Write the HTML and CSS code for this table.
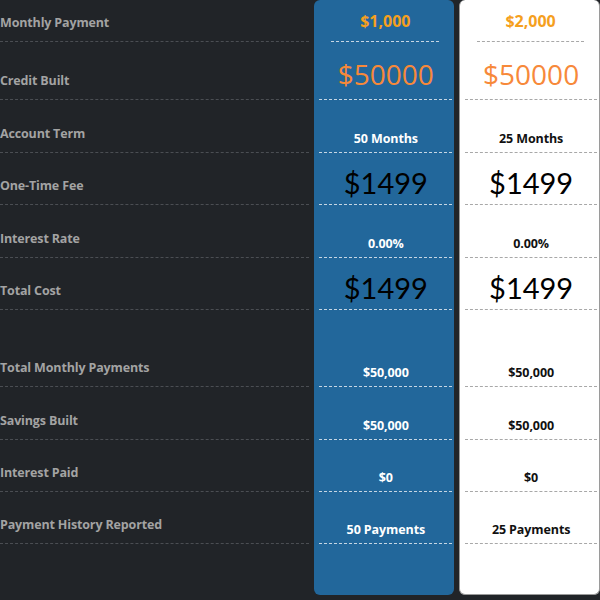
FILE: index.html
```html
<!DOCTYPE html>
<html>
<head>
<meta charset="utf-8">
<link rel="stylesheet" href="styles.css">
</head>
<body>
<div class="compare">
  <div class="col labels">
    <div class="cell">Monthly Payment</div>
    <div class="cell">Credit Built</div>
    <div class="cell">Account Term</div>
    <div class="cell">One-Time Fee</div>
    <div class="cell">Interest Rate</div>
    <div class="cell">Total Cost</div>
    <div class="cell">Total Monthly Payments</div>
    <div class="cell">Savings Built</div>
    <div class="cell">Interest Paid</div>
    <div class="cell">Payment History Reported</div>
  </div>
  <div class="col card blue">
    <div class="cell price">$1,000</div>
    <div class="cell big orange">$50000</div>
    <div class="cell small">50 Months</div>
    <div class="cell big dark">$1499</div>
    <div class="cell small">0.00%</div>
    <div class="cell big dark">$1499</div>
    <div class="cell small">$50,000</div>
    <div class="cell small">$50,000</div>
    <div class="cell small">$0</div>
    <div class="cell small">50 Payments</div>
  </div>
  <div class="col card white">
    <div class="cell price">$2,000</div>
    <div class="cell big orange">$50000</div>
    <div class="cell small">25 Months</div>
    <div class="cell big dark">$1499</div>
    <div class="cell small">0.00%</div>
    <div class="cell big dark">$1499</div>
    <div class="cell small">$50,000</div>
    <div class="cell small">$50,000</div>
    <div class="cell small">$0</div>
    <div class="cell small">25 Payments</div>
  </div>
</div>
</body>
</html>
```

FILE: styles.css
```css
html, body {
  margin: 0;
  padding: 0;
  background: #212428;
}

body {
  font-family: "Open Sans", "DejaVu Sans", sans-serif;
  overflow: hidden;
}

.compare {
  display: flex;
  gap: 5px;
  height: 595px;
}

.col {
  display: grid;
  grid-template-rows: 42px 58px 53px 52px 53px 52px 77px 53px 52px 52px;
  align-content: start;
}

.cell {
  box-sizing: border-box;
  border-bottom: 1px dashed #4b4e53;
}

.labels {
  width: 310px;
}

.labels .cell {
  display: flex;
  align-items: flex-end;
  padding-bottom: 10px;
  font-size: 12.5px;
  line-height: 16px;
  font-weight: 700;
  color: #a3a3a3;
  letter-spacing: -0.15px;
}

.card {
  width: 140px;
  border-radius: 6px;
  box-sizing: border-box;
}

.blue {
  background: #22679b;
}

.white {
  background: #ffffff;
  border: 1px solid #9a9a9a;
  border-top: none;
  width: 141px;
}

.card .cell {
  display: flex;
  justify-content: center;
  margin: 0 2px 0 5px;
  text-align: center;
}

.blue .cell {
  border-bottom-color: #c6d6e4;
}

.white .cell {
  border-bottom-color: #a8a8a8;
}

.card .price {
  margin: 0 15px 0 17px;
  align-items: center;
  font-size: 16px;
  font-weight: 700;
  color: #f5a01e;
  padding-top: 1px;
}

.card .big {
  align-items: center;
  font-family: "Lato", "Open Sans", sans-serif;
  font-size: 29px;
  font-weight: 400;
  padding-top: 7px;
}

.card .orange {
  font-family: "Open Sans", sans-serif;
  font-size: 28px;
  color: #f7893a;
  padding-top: 7px;
}

.card .dark {
  color: #000000;
}

.card .small {
  align-items: flex-end;
  padding-bottom: 5px;
  font-size: 12.5px;
  line-height: 16px;
  font-weight: 700;
  letter-spacing: -0.1px;
}

.blue .small {
  color: #ffffff;
}

.white .small {
  color: #111111;
}
```
